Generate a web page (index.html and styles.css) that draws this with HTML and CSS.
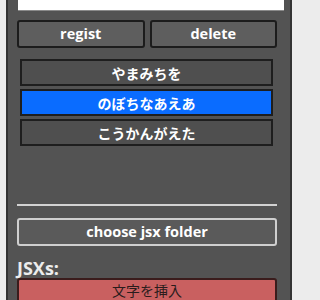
FILE: index.html
```html
<!DOCTYPE html>
<html>
<head>
<meta charset="utf-8">
<link rel="stylesheet" href="styles.css">
</head>
<body>
<div class="panel">
  <div class="field"></div>
  <div class="btn-row">
    <div class="btn">regist</div>
    <div class="btn">delete</div>
  </div>
  <div class="list">
    <div class="item">やまみちを</div>
    <div class="item selected">のぼちなあえあ</div>
    <div class="item">こうかんがえた</div>
  </div>
  <div class="separator"></div>
  <div class="btn light">choose jsx folder</div>
  <div class="label">JSXs:</div>
  <div class="btn red">文字を挿入</div>
</div>
</body>
</html>
```
FILE: styles.css
```css
html, body {
  margin: 0;
  padding: 0;
  background: #ececec;
  height: 300px;
  overflow: hidden;
}
body {
  font-family: "Open Sans", "Noto Sans CJK JP", sans-serif;
}
.panel {
  margin-left: 6px;
  width: 286px;
  height: 300px;
  box-sizing: border-box;
  border-left: 2px solid #333333;
  border-right: 2px solid #333333;
  background: #535353;
  padding: 0 13px 0 9px;
  overflow: hidden;
}
.field {
  height: 11px;
  margin: 0 -7px 0 1px;
  background: #ffffff;
  border-bottom: 1px solid #8a8a8a;
  box-sizing: border-box;
}
.btn-row {
  display: grid;
  grid-template-columns: 1fr 1fr;
  gap: 5px;
  margin-top: 9px;
}
.btn {
  height: 28px;
  box-sizing: border-box;
  border: 2px solid #1c1c1c;
  border-radius: 3px;
  background: #5e5e5e;
  color: #ffffff;
  font-weight: 700;
  font-size: 14.5px;
  display: flex;
  align-items: center;
  justify-content: center;
  line-height: 1;
}
.list {
  margin: 11px 4px 0 3px;
  display: flex;
  flex-direction: column;
  gap: 3px;
}
.item {
  height: 27px;
  box-sizing: border-box;
  border: 2px solid #1e1e1e;
  background: #4f4f4f;
  color: #ffffff;
  font-weight: 700;
  font-size: 14px;
  display: flex;
  align-items: center;
  justify-content: center;
}
.item.selected {
  background: #0a6cff;
}
.separator {
  height: 2px;
  background: #d2d2d2;
  margin-top: 58px;
}
.btn.light {
  margin-top: 12px;
  border-color: #cfcfcf;
  background: #5a5a5a;
}
.label {
  margin-top: 12px;
  color: #ececec;
  font-weight: 700;
  font-size: 18px;
  line-height: 20px;
}
.btn.red {
  height: 30px;
  border-color: #3a1c1c;
  background: #c96060;
  color: #2a1c1c;
  font-weight: 400;
  font-size: 14px;
  align-items: flex-start;
  padding-top: 4px;
}
```
